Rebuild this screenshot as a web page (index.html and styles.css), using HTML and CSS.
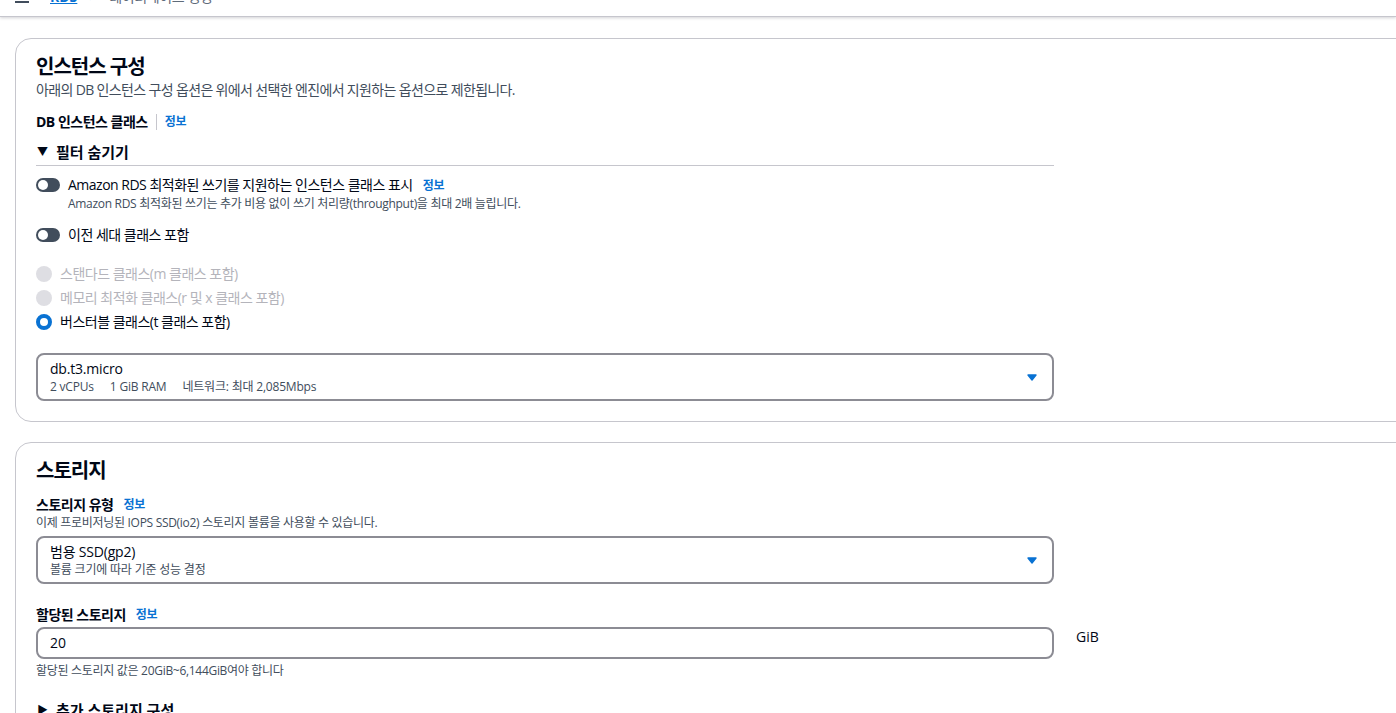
FILE: index.html
```html
<!DOCTYPE html>
<html lang="ko">
<head>
<meta charset="utf-8">
<title>데이터베이스 생성</title>
<link rel="stylesheet" href="styles.css">
</head>
<body>
<header class="topbar">
  <div class="crumbs">
    <svg class="menu" width="14" height="14" viewBox="0 0 14 14"><rect x="0" y="1" width="14" height="2" fill="#414d5c"/><rect x="0" y="6" width="14" height="2" fill="#414d5c"/><rect x="0" y="11" width="14" height="2" fill="#414d5c"/></svg>
    <a class="crumb-link">RDS</a>
    <span class="crumb-sep">&gt;</span>
    <span class="crumb-cur">데이터베이스 생성</span>
  </div>
</header>
<main class="main">
  <section class="panel">
    <h2 class="panel-title">인스턴스 구성</h2>
    <p class="panel-desc">아래의 DB 인스턴스 구성 옵션은 위에서 선택한 엔진에서 지원하는 옵션으로 제한됩니다.</p>
    <div class="field-label first"><span class="label-text">DB 인스턴스 클래스</span><span class="vdiv"></span><a class="info">정보</a></div>
    <div class="expander"><span class="caret">▼</span>필터 숨기기</div>
    <div class="toggle-row">
      <span class="toggle"><span class="knob"></span></span>
      <div>
        <div class="toggle-label">Amazon RDS 최적화된 쓰기를 지원하는 인스턴스 클래스 표시<a class="info gap">정보</a></div>
        <div class="toggle-desc">Amazon RDS 최적화된 쓰기는 추가 비용 없이 쓰기 처리량(throughput)을 최대 2배 늘립니다.</div>
      </div>
    </div>
    <div class="toggle-row second">
      <span class="toggle"><span class="knob"></span></span>
      <div class="toggle-label">이전 세대 클래스 포함</div>
    </div>
    <div class="radios">
      <div class="radio disabled"><span class="dot"></span>스탠다드 클래스(m 클래스 포함)</div>
      <div class="radio disabled"><span class="dot"></span>메모리 최적화 클래스(r 및 x 클래스 포함)</div>
      <div class="radio checked"><span class="dot"></span>버스터블 클래스(t 클래스 포함)</div>
    </div>
    <div class="select sel-class">
      <div class="sel-text">
        <div class="sel-main">db.t3.micro</div>
        <div class="sel-sub"><span>2 vCPUs</span><span>1 GiB RAM</span><span>네트워크: 최대 2,085Mbps</span></div>
      </div>
      <svg class="sel-caret" width="10" height="7" viewBox="0 0 10 7"><path d="M1 1 L9 1 L5 6 Z" fill="#0972d3" stroke="#0972d3" stroke-width="1.4" stroke-linejoin="round"/></svg>
    </div>
  </section>

  <section class="panel second-panel">
    <h2 class="panel-title">스토리지</h2>
    <div class="field-label"><span class="label-text">스토리지 유형</span><a class="info gap">정보</a></div>
    <div class="field-desc">이제 프로비저닝된 IOPS SSD(io2) 스토리지 볼륨을 사용할 수 있습니다.</div>
    <div class="select sel-storage">
      <div class="sel-text">
        <div class="sel-main">범용 SSD(gp2)</div>
        <div class="sel-sub">볼륨 크기에 따라 기준 성능 결정</div>
      </div>
      <svg class="sel-caret" width="10" height="7" viewBox="0 0 10 7"><path d="M1 1 L9 1 L5 6 Z" fill="#0972d3" stroke="#0972d3" stroke-width="1.4" stroke-linejoin="round"/></svg>
    </div>
    <div class="field-label alloc"><span class="label-text">할당된 스토리지</span><a class="info gap">정보</a></div>
    <div class="input-row">
      <div class="input">20</div>
      <span class="unit">GiB</span>
    </div>
    <div class="field-desc hint">할당된 스토리지 값은 20GiB~6,144GiB여야 합니다</div>
    <div class="expander collapsed"><span class="caret">▶</span>추가 스토리지 구성</div>
  </section>
</main>
</body>
</html>
```

FILE: styles.css
```css
html, body {
  margin: 0;
  padding: 0;
  background: #ffffff;
  overflow: hidden;
  height: 713px;
}
body {
  font-family: "Open Sans", "Noto Sans CJK KR", sans-serif;
  color: #000716;
  font-size: 14px;
  line-height: 20px;
}
.topbar {
  height: 16px;
  border-bottom: 1px solid #c6c6cd;
  box-shadow: 0 1px 3px rgba(0, 7, 22, 0.18);
  overflow: hidden;
  position: relative;
  z-index: 2;
  background: #fff;
}
.crumbs {
  display: flex;
  align-items: center;
  margin-top: -13px;
  padding-left: 15px;
  height: 20px;
}
.menu { margin-right: 21px; }
.crumb-link {
  color: #0972d3;
  text-decoration: underline;
  font-weight: 700;
  margin-right: 12px;
}
.crumb-sep { color: #8c8c94; margin-right: 12px; }
.crumb-cur { color: #5f6b7a; letter-spacing: -0.4px; }

.main {
  padding: 21px 0 0 15px;
}
.panel {
  width: 1420px;
  border: 1px solid #c6c6cd;
  border-radius: 16px;
  padding: 16px 20px 20px 20px;
  box-sizing: border-box;
}
.second-panel {
  margin-top: 20px;
  padding-bottom: 40px;
}
.panel-title {
  margin: 0;
  font-size: 20px;
  line-height: 24px;
  font-weight: 700;
  letter-spacing: -1px;
}
.panel-desc {
  margin: 1px 0 0 0;
  font-size: 14px;
  line-height: 20px;
  color: #414d5c;
  letter-spacing: -0.65px;
}
.field-label {
  display: flex;
  align-items: center;
  margin-top: 12px;
  font-weight: 700;
  font-size: 14px;
  line-height: 20px;
}
.label-text { letter-spacing: -0.5px; }
.vdiv {
  display: inline-block;
  width: 1px;
  height: 16px;
  background: #c6c6cd;
  margin: 0 8px 0 8px;
}
.info {
  color: #0972d3;
  font-size: 12px;
  font-weight: 700;
  letter-spacing: -0.3px;
}
.info.gap { margin-left: 10px; }
.expander {
  width: 1018px;
  margin-top: 10px;
  padding-bottom: 3px;
  border-bottom: 1px solid #c6c6cd;
  font-size: 15px;
  font-weight: 700;
  line-height: 20px;
  display: flex;
  align-items: center;
}
.caret {
  font-size: 11px;
  margin-right: 8px;
  margin-left: 1px;
}
.expander.collapsed {
  border-bottom: none;
  margin-top: 21px;
}
.toggle-row {
  display: flex;
  align-items: flex-start;
  margin-top: 9px;
}
.toggle-row.second { margin-top: 13px; }
.toggle {
  flex: none;
  width: 24px;
  height: 14px;
  border-radius: 7px;
  background: #414d5c;
  position: relative;
  margin-top: 3px;
  margin-right: 8px;
}
.knob {
  position: absolute;
  left: 2px;
  top: 2px;
  width: 10px;
  height: 10px;
  border-radius: 50%;
  background: #fff;
}
.toggle-label {
  font-size: 14px;
  line-height: 20px;
  letter-spacing: -0.5px;
}
.toggle-desc {
  font-size: 12px;
  line-height: 16px;
  color: #414d5c;
  letter-spacing: -0.3px;
}
.radios {
  margin-top: 19px;
  display: flex;
  flex-direction: column;
  gap: 4px;
}
.radio {
  display: flex;
  align-items: center;
  font-size: 14px;
  line-height: 20px;
  letter-spacing: -0.5px;
}
.dot {
  width: 16px;
  height: 16px;
  border-radius: 50%;
  box-sizing: border-box;
  margin-right: 8px;
  flex: none;
}
.radio.disabled { color: #b4b4bb; }
.radio.disabled .dot { background: #dedee3; }
.radio.checked .dot {
  border: 4.5px solid #0972d3;
  background: #fff;
}
.select {
  width: 1018px;
  box-sizing: border-box;
  border: 2px solid #8c8c94;
  border-radius: 8px;
  padding: 4px 15px 4px 12px;
  display: flex;
  align-items: center;
  justify-content: space-between;
}
.sel-class { margin-top: 21px; }
.sel-storage { margin-top: 5px; }
.sel-main {
  font-size: 14px;
  line-height: 20px;
  letter-spacing: -0.2px;
}
.sel-sub {
  font-size: 12px;
  line-height: 16px;
  color: #414d5c;
  display: flex;
  gap: 16px;
  letter-spacing: -0.2px;
}
.sel-caret { flex: none; margin-top: 1px; }
.field-desc {
  font-size: 12px;
  line-height: 16px;
  color: #414d5c;
  letter-spacing: -0.3px;
}
.field-label.alloc { margin-top: 21px; }
.input-row {
  display: flex;
  align-items: center;
  margin-top: 2px;
}
.input {
  width: 1018px;
  height: 32px;
  box-sizing: border-box;
  border: 2px solid #8c8c94;
  border-radius: 8px;
  padding: 0 12px;
  display: flex;
  align-items: center;
  font-size: 14px;
}
.unit {
  margin-left: 22px;
  margin-top: -12px;
  font-size: 14px;
}
.hint { margin-top: 4px; }
```
